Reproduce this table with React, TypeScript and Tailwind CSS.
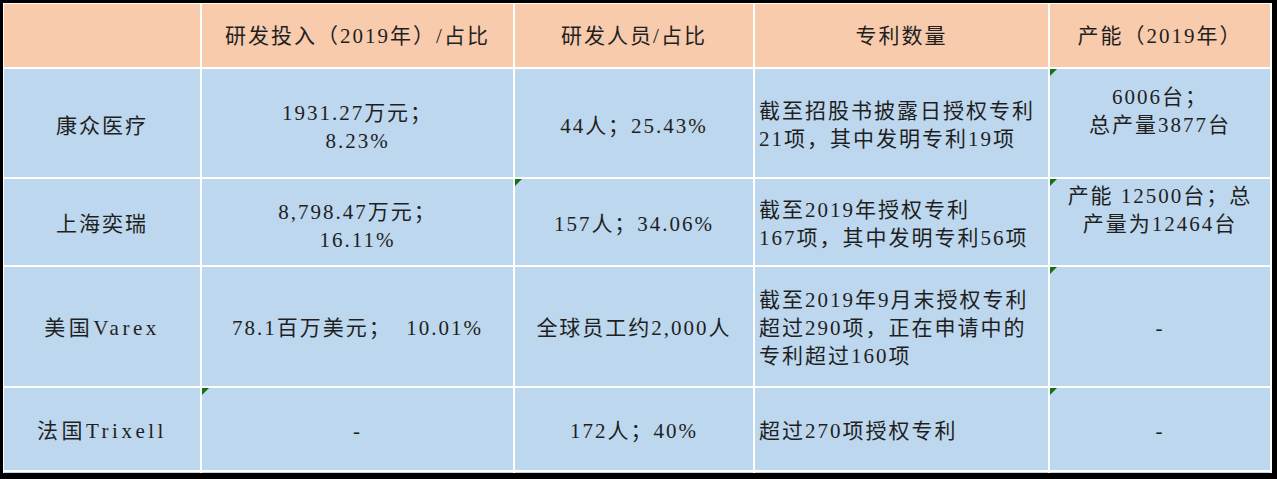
const font = "font-['Liberation_Serif','Noto_Sans_CJK_SC',serif]";

type Cell = {
  lines: string[];
  align?: "center" | "left" | "top";
  mark?: boolean;
  pt?: string;
  wide?: boolean;
};

const headers = ["", "研发投入（2019年）/占比", "研发人员/占比", "专利数量", "产能（2019年）"];

const rows: Cell[][] = [
  [
    { lines: ["康众医疗"], pt: "pt-[6px]" },
    { lines: ["1931.27万元；", "8.23%"], pt: "pt-[7px]" },
    { lines: ["44人；25.43%"], pt: "pt-[5px]" },
    { lines: ["截至招股书披露日授权专利", "21项，其中发明专利19项"], align: "left", pt: "pt-[3px]" },
    { lines: ["6006台；", "总产量3877台"], align: "top", mark: true, pt: "pt-[14px]" },
  ],
  [
    { lines: ["上海奕瑞"], pt: "pt-[4px]" },
    { lines: ["8,798.47万元；", "16.11%"], pt: "pt-[8px]" },
    { lines: ["157人；34.06%"], mark: true, pt: "pt-[4px]" },
    { lines: ["截至2019年授权专利", "167项，其中发明专利56项"], align: "left", pt: "pt-[4px]" },
    { lines: ["产能 12500台；总", "产量为12464台"], align: "top", mark: true, pt: "pt-[3px]" },
  ],
  [
    { lines: ["美国Varex"], wide: true, pt: "pt-[2px]" },
    { lines: ["78.1百万美元；  10.01%"], pt: "pt-[2px]" },
    { lines: ["全球员工约2,000人"], pt: "pt-[2px]" },
    { lines: ["截至2019年9月末授权专利", "超过290项，正在申请中的", "专利超过160项"], align: "left", pt: "pt-[2px]" },
    { lines: ["-"], mark: true, pt: "pt-[2px]" },
  ],
  [
    { lines: ["法国Trixell"], wide: true, pt: "pt-[3px]" },
    { lines: ["-"], mark: true, pt: "pt-[3px]" },
    { lines: ["172人；40%"], pt: "pt-[3px]" },
    { lines: ["超过270项授权专利"], align: "left", pt: "pt-[3px]" },
    { lines: ["-"], mark: true, pt: "pt-[3px]" },
  ],
];

function Marker() {
  return (
    <span className="absolute top-0 left-0 w-0 h-0 border-t-[7px] border-t-[#127312] border-r-[7px] border-r-transparent" />
  );
}

function BodyCell({ cell }: { cell: Cell }) {
  const align = cell.align ?? "center";
  const place =
    align === "left"
      ? "items-center justify-start pl-[4px] text-left"
      : align === "top"
        ? "items-start justify-center text-center"
        : "items-center justify-center text-center";
  return (
    <div className={`relative flex bg-[#bdd7ee] ${place} ${cell.pt ?? ""}`}>
      {cell.mark && <Marker />}
      <div className={`whitespace-pre leading-[28px] ${cell.wide ? "tracking-[3.5px]" : ""}`}>
        {cell.lines.map((l, i) => (
          <div key={i}>{l}</div>
        ))}
      </div>
    </div>
  );
}

export default function App() {
  return (
    <div className={`w-[1277px] h-[479px] bg-white ${font} text-[21px] tracking-[2px] text-[#1f1f1f]`}>
      <div className="w-full h-full border-t-[3px] border-l-[3px] border-r-[5px] border-b-[6px] border-black bg-white pt-[1px] pl-[1px] pr-[2px]">
        <div className="grid grid-cols-[196px_311px_238px_293px_220px] grid-rows-[63px_108px_86px_119px_82px_1px] gap-[2px]">
          {headers.map((h, i) => (
            <div key={i} className="flex items-center justify-center bg-[#f8cbad] whitespace-nowrap pt-[2px]">
              {h}
            </div>
          ))}
          {rows.map((row, r) => row.map((cell, c) => <BodyCell key={`${r}-${c}`} cell={cell} />))}
          {[0, 1, 2, 3, 4].map((i) => (
            <div key={`tail-${i}`} className="bg-[#bdd7ee]" />
          ))}
        </div>
      </div>
    </div>
  );
}
